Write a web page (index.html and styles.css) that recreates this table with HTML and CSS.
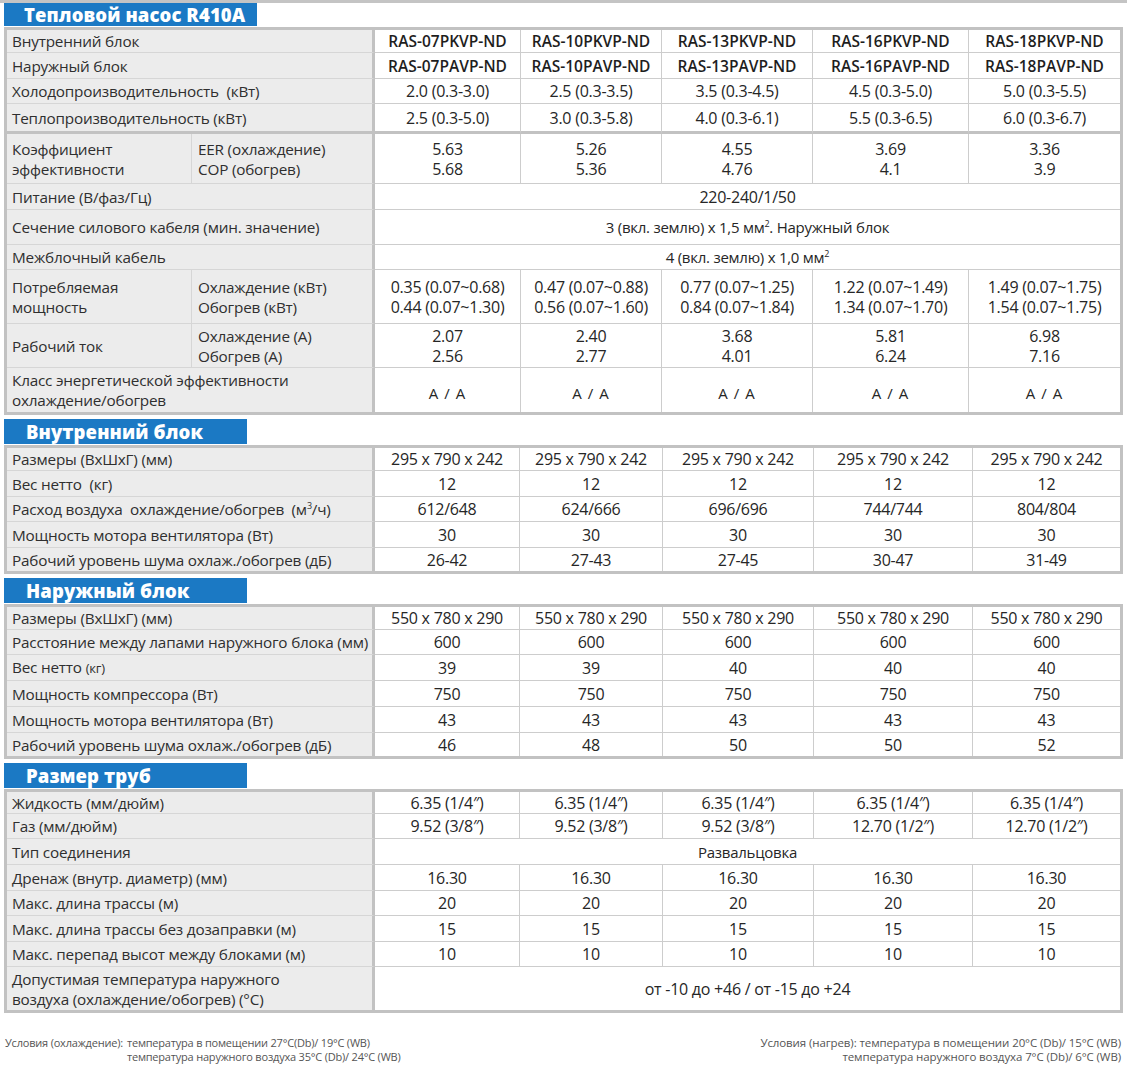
FILE: index.html
```html
<!DOCTYPE html>
<html lang="ru">
<head>
<meta charset="utf-8">
<title>Тепловой насос R410A</title>
<link rel="stylesheet" href="styles.css">
</head>
<body>
<div class="topline"></div>
<main class="sheet">
  <h2 class="sec sec-first">Тепловой насос R410A</h2>
  <table class="spec t1">
    <colgroup><col class="c185"><col class="c183"><col class="c146"><col class="c141"><col class="c151"><col class="c156"><col class="c151"></colgroup>
    <tr class="h23"><td class="lab lab-end" colspan="2">Внутренний блок</td><td class="m">RAS-07PKVP-ND</td><td class="m">RAS-10PKVP-ND</td><td class="m">RAS-13PKVP-ND</td><td class="m">RAS-16PKVP-ND</td><td class="m last">RAS-18PKVP-ND</td></tr>
    <tr class="h26"><td class="lab lab-end" colspan="2">Наружный блок</td><td class="m">RAS-07PAVP-ND</td><td class="m">RAS-10PAVP-ND</td><td class="m">RAS-13PAVP-ND</td><td class="m">RAS-16PAVP-ND</td><td class="m last">RAS-18PAVP-ND</td></tr>
    <tr class="h25"><td class="lab lab-end" colspan="2">Холодопроизводительность&nbsp; (кВт)</td><td>2.0 (0.3-3.0)</td><td>2.5 (0.3-3.5)</td><td>3.5 (0.3-4.5)</td><td>4.5 (0.3-5.0)</td><td class="last">5.0 (0.3-5.5)</td></tr>
    <tr class="h30 thick"><td class="lab lab-end" colspan="2">Теплопроизводительность (кВт)</td><td>2.5 (0.3-5.0)</td><td>3.0 (0.3-5.8)</td><td>4.0 (0.3-6.1)</td><td>5.5 (0.3-6.5)</td><td class="last">6.0 (0.3-6.7)</td></tr>
    <tr class="h50"><td class="lab">Коэффициент<br>эффективности</td><td class="lab lab-end sub">EER (охлаждение)<br>COP (обогрев)</td><td>5.63<br>5.68</td><td>5.26<br>5.36</td><td>4.55<br>4.76</td><td>3.69<br>4.1</td><td class="last">3.36<br>3.9</td></tr>
    <tr class="h26"><td class="lab lab-end" colspan="2">Питание (В/фаз/Гц)</td><td class="last" colspan="5">220-240/1/50</td></tr>
    <tr class="h35"><td class="lab lab-end" colspan="2">Сечение силового кабеля (мин. значение)</td><td class="last small" colspan="5">3 (вкл. землю) x 1,5 мм<sup>2</sup>. Наружный блок</td></tr>
    <tr class="h25"><td class="lab lab-end" colspan="2">Межблочный кабель</td><td class="last small" colspan="5">4 (вкл. землю) x 1,0 мм<sup>2</sup></td></tr>
    <tr class="h54"><td class="lab">Потребляемая<br>мощность</td><td class="lab lab-end sub">Охлаждение (кВт)<br>Обогрев (кВт)</td><td>0.35 (0.07~0.68)<br>0.44 (0.07~1.30)</td><td>0.47 (0.07~0.88)<br>0.56 (0.07~1.60)</td><td>0.77 (0.07~1.25)<br>0.84 (0.07~1.84)</td><td>1.22 (0.07~1.49)<br>1.34 (0.07~1.70)</td><td class="last">1.49 (0.07~1.75)<br>1.54 (0.07~1.75)</td></tr>
    <tr class="h44"><td class="lab">Рабочий ток</td><td class="lab lab-end sub">Охлаждение (А)<br>Обогрев (А)</td><td>2.07<br>2.56</td><td>2.40<br>2.77</td><td>3.68<br>4.01</td><td>5.81<br>6.24</td><td class="last">6.98<br>7.16</td></tr>
    <tr class="h44 end"><td class="lab lab-end" colspan="2">Класс энергетической эффективности<br>охлаждение/обогрев</td><td class="cls">A / A</td><td class="cls">A / A</td><td class="cls">A / A</td><td class="cls">A / A</td><td class="cls last">A / A</td></tr>
  </table>

  <h2 class="sec">Внутренний блок</h2>
  <table class="spec">
    <colgroup><col class="c368"><col class="c145"><col class="c143"><col class="c151"><col class="c159"><col class="c147"></colgroup>
    <tr class="h23"><td class="lab lab-end">Размеры (ВхШхГ) (мм)</td><td>295 x 790 x 242</td><td>295 x 790 x 242</td><td>295 x 790 x 242</td><td>295 x 790 x 242</td><td class="last">295 x 790 x 242</td></tr>
    <tr class="h26"><td class="lab lab-end">Вес нетто&nbsp; (кг)</td><td>12</td><td>12</td><td>12</td><td>12</td><td class="last">12</td></tr>
    <tr class="h25"><td class="lab lab-end">Расход воздуха&nbsp; охлаждение/обогрев&nbsp; (м<sup>3</sup>/ч)</td><td>612/648</td><td>624/666</td><td>696/696</td><td>744/744</td><td class="last">804/804</td></tr>
    <tr class="h26"><td class="lab lab-end">Мощность мотора вентилятора (Вт)</td><td>30</td><td>30</td><td>30</td><td>30</td><td class="last">30</td></tr>
    <tr class="h23 end"><td class="lab lab-end">Рабочий уровень шума охлаж./обогрев (дБ)</td><td>26-42</td><td>27-43</td><td>27-45</td><td>30-47</td><td class="last">31-49</td></tr>
  </table>

  <h2 class="sec">Наружный блок</h2>
  <table class="spec">
    <colgroup><col class="c368"><col class="c145"><col class="c143"><col class="c151"><col class="c159"><col class="c147"></colgroup>
    <tr class="h23"><td class="lab lab-end">Размеры (ВхШхГ) (мм)</td><td>550 x 780 x 290</td><td>550 x 780 x 290</td><td>550 x 780 x 290</td><td>550 x 780 x 290</td><td class="last">550 x 780 x 290</td></tr>
    <tr class="h25"><td class="lab lab-end">Расстояние между лапами наружного блока (мм)</td><td>600</td><td>600</td><td>600</td><td>600</td><td class="last">600</td></tr>
    <tr class="h26"><td class="lab lab-end">Вес нетто <span class="unit">(кг)</span></td><td>39</td><td>39</td><td>40</td><td>40</td><td class="last">40</td></tr>
    <tr class="h26"><td class="lab lab-end">Мощность компрессора (Вт)</td><td>750</td><td>750</td><td>750</td><td>750</td><td class="last">750</td></tr>
    <tr class="h26"><td class="lab lab-end">Мощность мотора вентилятора (Вт)</td><td>43</td><td>43</td><td>43</td><td>43</td><td class="last">43</td></tr>
    <tr class="h23 end"><td class="lab lab-end">Рабочий уровень шума охлаж./обогрев (дБ)</td><td>46</td><td>48</td><td>50</td><td>50</td><td class="last">52</td></tr>
  </table>

  <h2 class="sec">Размер труб</h2>
  <table class="spec">
    <colgroup><col class="c368"><col class="c145"><col class="c143"><col class="c151"><col class="c159"><col class="c147"></colgroup>
    <tr class="h22"><td class="lab lab-end">Жидкость (мм/дюйм)</td><td>6.35 (1/4″)</td><td>6.35 (1/4″)</td><td>6.35 (1/4″)</td><td>6.35 (1/4″)</td><td class="last">6.35 (1/4″)</td></tr>
    <tr class="h25"><td class="lab lab-end">Газ (мм/дюйм)</td><td>9.52 (3/8″)</td><td>9.52 (3/8″)</td><td>9.52 (3/8″)</td><td>12.70 (1/2″)</td><td class="last">12.70 (1/2″)</td></tr>
    <tr class="h26"><td class="lab lab-end">Тип соединения</td><td class="last small" colspan="5">Развальцовка</td></tr>
    <tr class="h26"><td class="lab lab-end">Дренаж (внутр. диаметр) (мм)</td><td>16.30</td><td>16.30</td><td>16.30</td><td>16.30</td><td class="last">16.30</td></tr>
    <tr class="h25"><td class="lab lab-end">Макс. длина трассы (м)</td><td>20</td><td>20</td><td>20</td><td>20</td><td class="last">20</td></tr>
    <tr class="h26"><td class="lab lab-end">Макс. длина трассы без дозаправки (м)</td><td>15</td><td>15</td><td>15</td><td>15</td><td class="last">15</td></tr>
    <tr class="h25"><td class="lab lab-end">Макс. перепад высот между блоками (м)</td><td>10</td><td>10</td><td>10</td><td>10</td><td class="last">10</td></tr>
    <tr class="h43 end"><td class="lab lab-end">Допустимая температура наружного<br>воздуха (охлаждение/обогрев) (°C)</td><td class="last" colspan="5">от -10 до +46 / от -15 до +24</td></tr>
  </table>

  <footer class="notes">
    <div class="note">
      <span class="note-head">Условия (охлаждение):</span>
      <div class="note-lines">
        <span>температура в помещении 27°C(Db)/ 19°C (WB)</span>
        <span>температура наружного воздуха 35°C (Db)/ 24°C (WB)</span>
      </div>
    </div>
    <div class="note note-right">
      <span>Условия (нагрев): температура в помещении 20°C (Db)/ 15°C (WB)</span>
      <span>температура наружного воздуха 7°C (Db)/ 6°C (WB)</span>
    </div>
  </footer>
</main>
</body>
</html>
```
FILE: styles.css
```css
* { box-sizing: border-box; }
html, body { margin: 0; padding: 0; background: #fff; }
body {
  font-family: "Open Sans", "Noto Sans", "DejaVu Sans", sans-serif;
  color: #2b2b2b;
  width: 1127px;
}
.topline { height: 3px; background: #c4c4c4; }
.sheet { padding: 0 0 0 4px; }

.sec {
  margin: 4px 0 1px 0;
  width: 243px;
  height: 25px;
  background: #1b79c4;
  color: #fff;
  font-size: 18.5px;
  font-weight: 800;
  line-height: 25px;
  padding-left: 22px;
  letter-spacing: 0.1px;
}
.sec-first { margin-top: 0; width: 253px; height: 23px; line-height: 23px; padding-left: 20px; }

.spec {
  width: 1119px;
  table-layout: fixed;
  border-collapse: separate;
  border-spacing: 0;
  border: 3px solid #c2c2c2;
  font-size: 16px;
  line-height: 20px;
}
.c185 { width: 185px; } .c183 { width: 183px; } .c146 { width: 146px; }
.c141 { width: 141px; } .c151 { width: 151px; } .c156 { width: 156px; }
.c368 { width: 368px; } .c145 { width: 145px; } .c143 { width: 143px; }
.c159 { width: 159px; } .c147 { width: 147px; }

.spec td {
  padding: 0 2px;
  text-align: center;
  vertical-align: middle;
  border-right: 1px solid #cdcdcd;
  border-bottom: 1px solid #cdcdcd;
  white-space: nowrap;
  color: #262626;
  font-weight: 400;
  letter-spacing: -0.25px;
}
.spec td.last { border-right: none; }
.spec tr.end td { border-bottom: none; }
.spec tr.thick td { border-bottom: 3px solid #c2c2c2; }

.spec td.lab {
  background: #ececec;
  text-align: left;
  padding-left: 5px;
  color: #2f2f2f;
  font-size: 15.3px;
  border-bottom-color: #d6d6d6;
  border-right-color: #d6d6d6;
  letter-spacing: -0.2px;
}
.spec td.lab.sub { padding-left: 6px; }
.spec td.lab-end { border-right: 3px solid #c2c2c2; }
.spec tr.thick td.lab { border-bottom: 3px solid #c2c2c2; }

.spec td.m { font-weight: 600; font-size: 15.5px; letter-spacing: 0; color: #1e1e1e; }
.spec td.small { font-size: 15px; }
.spec td.cls { letter-spacing: 1px; padding-top: 6px; font-size: 15px; }
.unit { font-size: 13px; }
sup { font-size: 9px; line-height: 0; vertical-align: 6px; }

.h22 { height: 22px; } .h23 { height: 23px; } .h25 { height: 25px; }
.h26 { height: 26px; } .h30 { height: 30px; } .h35 { height: 35px; }
.h43 { height: 43px; } .h44 { height: 44px; } .h50 { height: 50px; }
.h54 { height: 54px; }

.notes {
  display: flex;
  justify-content: space-between;
  margin-top: 23px;
  padding-right: 6px;
  font-size: 11px;
  line-height: 14px;
  color: #555;
  letter-spacing: -0.2px;
}
.note { display: flex; }
.note-head { margin-right: 4px; margin-left: 1px; }
.note-lines { display: flex; flex-direction: column; }
.note-right { flex-direction: column; align-items: flex-end; font-size: 11.5px; letter-spacing: -0.1px; }
```
